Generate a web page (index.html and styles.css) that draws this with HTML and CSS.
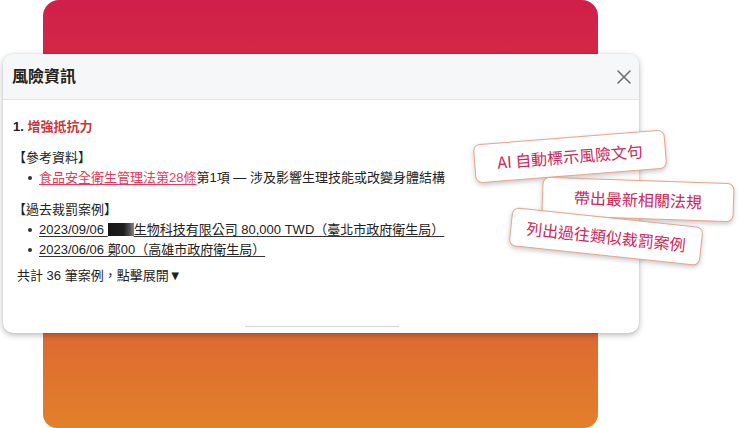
FILE: index.html
```html
<!DOCTYPE html>
<html lang="zh-Hant">
<head>
<meta charset="utf-8">
<title>風險資訊</title>
<link rel="stylesheet" href="styles.css">
</head>
<body>
<div class="stage">
  <div class="backdrop"></div>
  <section class="card">
    <header class="card-head">
      <h1 class="card-title">風險資訊</h1>
      <button class="close" aria-label="關閉">
        <svg width="14" height="14" viewBox="0 0 14 14"><path d="M1 1L13 13M13 1L1 13" stroke="#6b6b6b" stroke-width="1.5" stroke-linecap="round" fill="none"/></svg>
      </button>
    </header>
    <div class="card-body">
      <div class="item-title"><span class="num">1.</span> <span class="red">增強抵抗力</span></div>
      <div class="section first">
        <div class="sec-head">【參考資料】</div>
        <ul class="list">
          <li><span class="dot"></span><span><a class="law">食品安全衛生管理法第28條</a>第1項 — 涉及影響生理技能或改變身體結構</span></li>
        </ul>
      </div>
      <div class="section">
        <div class="sec-head">【過去裁罰案例】</div>
        <ul class="list">
          <li><span class="dot"></span><span class="case">2023/09/06 <span class="redact"></span>生物科技有限公司 80,000 TWD（臺北市政府衛生局）</span></li>
          <li><span class="dot"></span><span class="case">2023/06/06 鄭00（高雄市政府衛生局）</span></li>
        </ul>
      </div>
      <div class="total">共計 36 筆案例，點擊展開▼</div>
    </div>
    <div class="handle"></div>
  </section>
  <div class="tag tag1">AI 自動標示風險文句</div>
  <div class="tag tag2">帶出最新相關法規</div>
  <div class="tag tag3">列出過往類似裁罰案例</div>
</div>
</body>
</html>
```
FILE: styles.css
```css
* { box-sizing: border-box; }
html, body { margin: 0; padding: 0; background: #fff; }
body {
  font-family: "Liberation Sans", "Noto Sans CJK TC", sans-serif;
  color: #222;
}
.stage {
  position: relative;
  width: 740px;
  height: 428px;
  overflow: hidden;
  display: grid;
  grid-template-columns: 740px;
  grid-template-rows: 428px;
}
.backdrop {
  grid-area: 1 / 1;
  margin-left: 43px;
  width: 555px;
  height: 428px;
  border-radius: 16px 16px 14px 14px;
  background: linear-gradient(180deg, #d01f4a 0%, #d8373f 35%, #de6a31 78%, #e2802a 100%);
}
.card {
  grid-area: 1 / 1;
  align-self: start;
  justify-self: start;
  margin: 54px 0 0 3px;
  width: 636px;
  height: 279px;
  background: #fff;
  border-radius: 10px;
  box-shadow: 0 2px 6px rgba(0,0,0,0.28), 0 0 1px rgba(0,0,0,0.2);
  display: flex;
  flex-direction: column;
  overflow: hidden;
}
.card-head {
  height: 46px;
  flex: none;
  background: #f6f7f8;
  border-bottom: 1px solid #e2e4e7;
  display: flex;
  align-items: center;
  justify-content: space-between;
  padding: 0 8px 0 9px;
}
.card-title {
  margin: 0;
  font-size: 16px;
  font-weight: 700;
  color: #222;
  line-height: 20px;
}
.close {
  border: 0;
  background: none;
  padding: 0;
  width: 14px;
  height: 14px;
  display: flex;
  margin-top: 1px;
}
.card-body {
  flex: 1;
  padding: 17px 10px 0 10px;
  font-size: 13px;
  line-height: 20px;
}
.item-title { font-weight: 700; }
.num { color: #222; }
.red { color: #cb363c; }
.section { padding-left: 4px; margin-top: 12px; }
.section.first { margin-top: 11px; }
.sec-head { margin-left: -4px; }
.list { list-style: none; margin: 0; padding: 0; }
.list li { display: flex; align-items: flex-start; }
.dot {
  flex: none;
  width: 4px;
  height: 4px;
  border-radius: 50%;
  background: #333;
  margin: 8px 7px 0 11px;
}
.law { color: #e23b5e; text-decoration: underline; text-underline-offset: 2px; }
.case { text-decoration: underline; text-underline-offset: 2px; text-decoration-color: #333; }
.redact {
  display: inline-block;
  width: 26px;
  height: 13px;
  vertical-align: -2px;
  background: linear-gradient(90deg, #161616 0%, #1e1e1e 60%, #555 85%, #888 100%);
}
.total { margin-top: 6px; padding-left: 4px; }
.handle {
  flex: none;
  width: 154px;
  height: 1px;
  background: #d6d6d6;
  align-self: center;
  margin: 0 0 6px 2px;
}
.tag {
  position: absolute;
  width: 192px;
  height: 39px;
  background: #fff;
  border: 1px solid #e8a48e;
  border-radius: 7px;
  box-shadow: 0 2px 5px rgba(0,0,0,0.22);
  color: #c8295b;
  font-family: "Noto Sans CJK TC", "Liberation Sans", sans-serif;
  font-size: 16px;
  line-height: 37px;
  text-align: center;
}
.tag1 { left: 474px; top: 137px; transform: rotate(-4.5deg); z-index: 1; }
.tag2 { left: 542px; top: 180px; transform: rotate(2deg); z-index: 2; }
.tag3 { left: 510px; top: 217px; transform: rotate(6deg); z-index: 3; }
```
